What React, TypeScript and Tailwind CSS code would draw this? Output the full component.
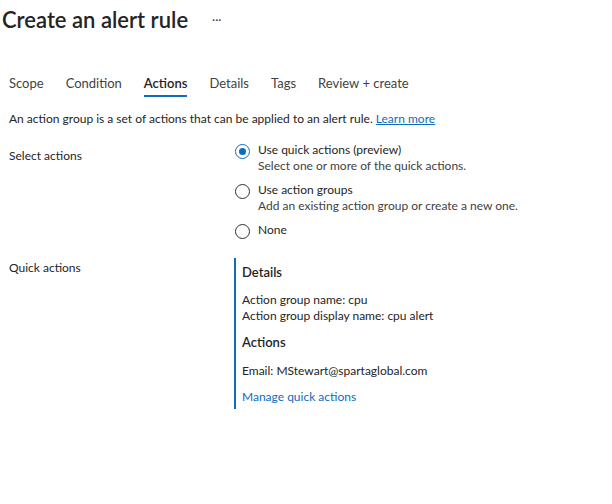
import React, { useState } from 'react';

const tabs = ['Scope', 'Condition', 'Actions', 'Details', 'Tags', 'Review + create'];

const options = [
  { key: 'quick', label: 'Use quick actions (preview)', hint: 'Select one or more of the quick actions.' },
  { key: 'groups', label: 'Use action groups', hint: 'Add an existing action group or create a new one.' },
  { key: 'none', label: 'None', hint: '' },
];

function Radio({ checked }: { checked: boolean }) {
  return (
    <span
      className={`flex h-[15px] w-[15px] shrink-0 items-center justify-center rounded-full border ${
        checked ? 'border-[#0f6cbd]' : 'border-[#323130]'
      }`}
    >
      {checked && <span className="h-[7px] w-[7px] rounded-full bg-[#0f6cbd]" />}
    </span>
  );
}

export default function App() {
  const [active, setActive] = useState('Actions');
  const [choice, setChoice] = useState('quick');

  return (
    <div className="min-h-[504px] w-[612px] bg-white text-[12px] text-[#242424] [font-family:Lato,'Noto_Sans',sans-serif]">
      {/* header */}
      <div className="flex items-center pl-[2px] pt-[6px]">
        <h1 className="text-[22px] font-semibold leading-[28px] text-[#242424]">Create an alert rule</h1>
        <span className="ml-[24px] text-[12px] leading-none text-[#424242]">···</span>
      </div>

      {/* tabs */}
      <div className="mt-[39px] flex gap-[22px] pl-[9px]">
        {tabs.map((t) => (
          <button
            key={t}
            onClick={() => setActive(t)}
            className={`flex flex-col text-[13px] leading-[20px] ${
              active === t ? 'font-semibold text-[#242424]' : 'text-[#424242]'
            }`}
          >
            <span>{t}</span>
            <span className={`mt-[2px] h-[2px] w-full ${active === t ? 'bg-[#0f6cbd]' : ''}`} />
          </button>
        ))}
      </div>

      <p className="mt-[14px] pl-[9px] leading-[16px]">
        An action group is a set of actions that can be applied to an alert rule.{' '}
        <a className="text-[#0f6cbd] underline">Learn more</a>
      </p>

      {/* select actions */}
      <div className="mt-[15px] flex pl-[9px]">
        <div className="w-[226px] pt-[6px] leading-[16px]">Select actions</div>
        <div className="flex flex-col gap-[8px]">
          {options.map((o) => (
            <label key={o.key} className="flex cursor-pointer gap-[8px]" onClick={() => setChoice(o.key)}>
              <span className="pt-[2px]">
                <Radio checked={choice === o.key} />
              </span>
              <span className="flex flex-col leading-[16px]">
                <span>{o.label}</span>
                {o.hint && <span className="text-[#424242]">{o.hint}</span>}
              </span>
            </label>
          ))}
        </div>
      </div>

      {/* quick actions */}
      <div className="mt-[19px] flex pl-[9px]">
        <div className="w-[225px] pt-[2px] leading-[16px]">Quick actions</div>
        <div className="flex h-[151px] flex-col border-l-2 border-[#0f6cbd] pl-[6px] pt-[6px] leading-[16px]">
          <h3 className="text-[13px] font-semibold">Details</h3>
          <div className="mt-[12px]">Action group name: cpu</div>
          <div>Action group display name: cpu alert</div>
          <h3 className="mt-[10px] text-[13px] font-semibold">Actions</h3>
          <div className="mt-[13px]">Email: MStewart@spartaglobal.com</div>
          <a className="mt-[10px] text-[#0f6cbd]">Manage quick actions</a>
        </div>
      </div>
    </div>
  );
}
